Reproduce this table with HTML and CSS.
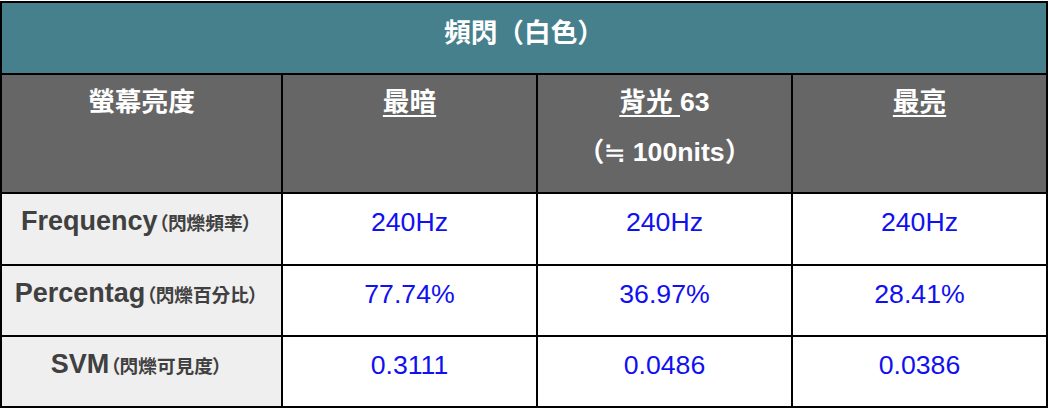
FILE: index.html
```html
<!DOCTYPE html>
<html lang="zh-Hant">
<head>
<meta charset="utf-8">
<title>頻閃（白色）</title>
<link rel="stylesheet" href="styles.css">
</head>
<body>
<table class="flicker">
  <colgroup>
    <col class="c-label">
    <col class="c-val">
    <col class="c-val">
    <col class="c-val c-last">
  </colgroup>
  <tr class="r-title">
    <th colspan="4" class="title">頻閃（白色）</th>
  </tr>
  <tr class="r-head">
    <th class="head">螢幕亮度</th>
    <th class="head"><span class="ul">最暗</span></th>
    <th class="head"><span class="ul">背光 </span>63<br>（≒ 100nits）</th>
    <th class="head"><span class="ul">最亮</span></th>
  </tr>
  <tr class="r-data">
    <td class="label">Frequency<span class="sub">（閃爍頻率）</span></td>
    <td class="val">240Hz</td>
    <td class="val">240Hz</td>
    <td class="val">240Hz</td>
  </tr>
  <tr class="r-data r-mid">
    <td class="label">Percentag<span class="sub">（閃爍百分比）</span></td>
    <td class="val">77.74%</td>
    <td class="val">36.97%</td>
    <td class="val">28.41%</td>
  </tr>
  <tr class="r-data r-mid">
    <td class="label">SVM<span class="sub">（閃爍可見度）</span></td>
    <td class="val">0.3111</td>
    <td class="val">0.0486</td>
    <td class="val">0.0386</td>
  </tr>
</table>
</body>
</html>
```

FILE: styles.css
```css
html, body {
  margin: 0;
  padding: 0;
  background: #ffffff;
}

body {
  padding-top: 1px;
  font-family: "Liberation Sans", "Noto Sans CJK TC", sans-serif;
}

.flicker {
  border-collapse: collapse;
  table-layout: fixed;
  width: 1046px;
  border: 2px solid #000;
}

.c-label { width: 281px; }
.c-val { width: 255px; }

.flicker th,
.flicker td {
  border: 2px solid #000;
  text-align: center;
}

.r-title { height: 72px; }
.r-head { height: 119px; }
.r-data { height: 72px; }
.r-mid { height: 71px; }

.flicker .title {
  background: #46808d;
  color: #ffffff;
  font-size: 26.67px;
  font-weight: bold;
  line-height: 40px;
  vertical-align: top;
  padding: 10px 0 0;
}

.flicker .head {
  background: #666666;
  color: #ffffff;
  font-size: 26.67px;
  font-weight: bold;
  line-height: 50px;
  vertical-align: top;
  padding: 2px 0 0;
}

.ul {
  text-decoration: underline;
  text-decoration-thickness: 2px;
  text-underline-offset: 4px;
}

.flicker .label {
  background: #efefef;
  color: #404040;
  font-size: 27px;
  font-weight: bold;
  line-height: 40px;
  vertical-align: top;
  padding: 7px 10px 0 0;
}

.sub {
  font-size: 18.67px;
  font-feature-settings: "palt";
  margin-left: 1px;
}

.flicker .val {
  color: #1010f0;
  font-size: 26.67px;
  line-height: 40px;
  vertical-align: top;
  padding: 8px 0 0;
}
```
